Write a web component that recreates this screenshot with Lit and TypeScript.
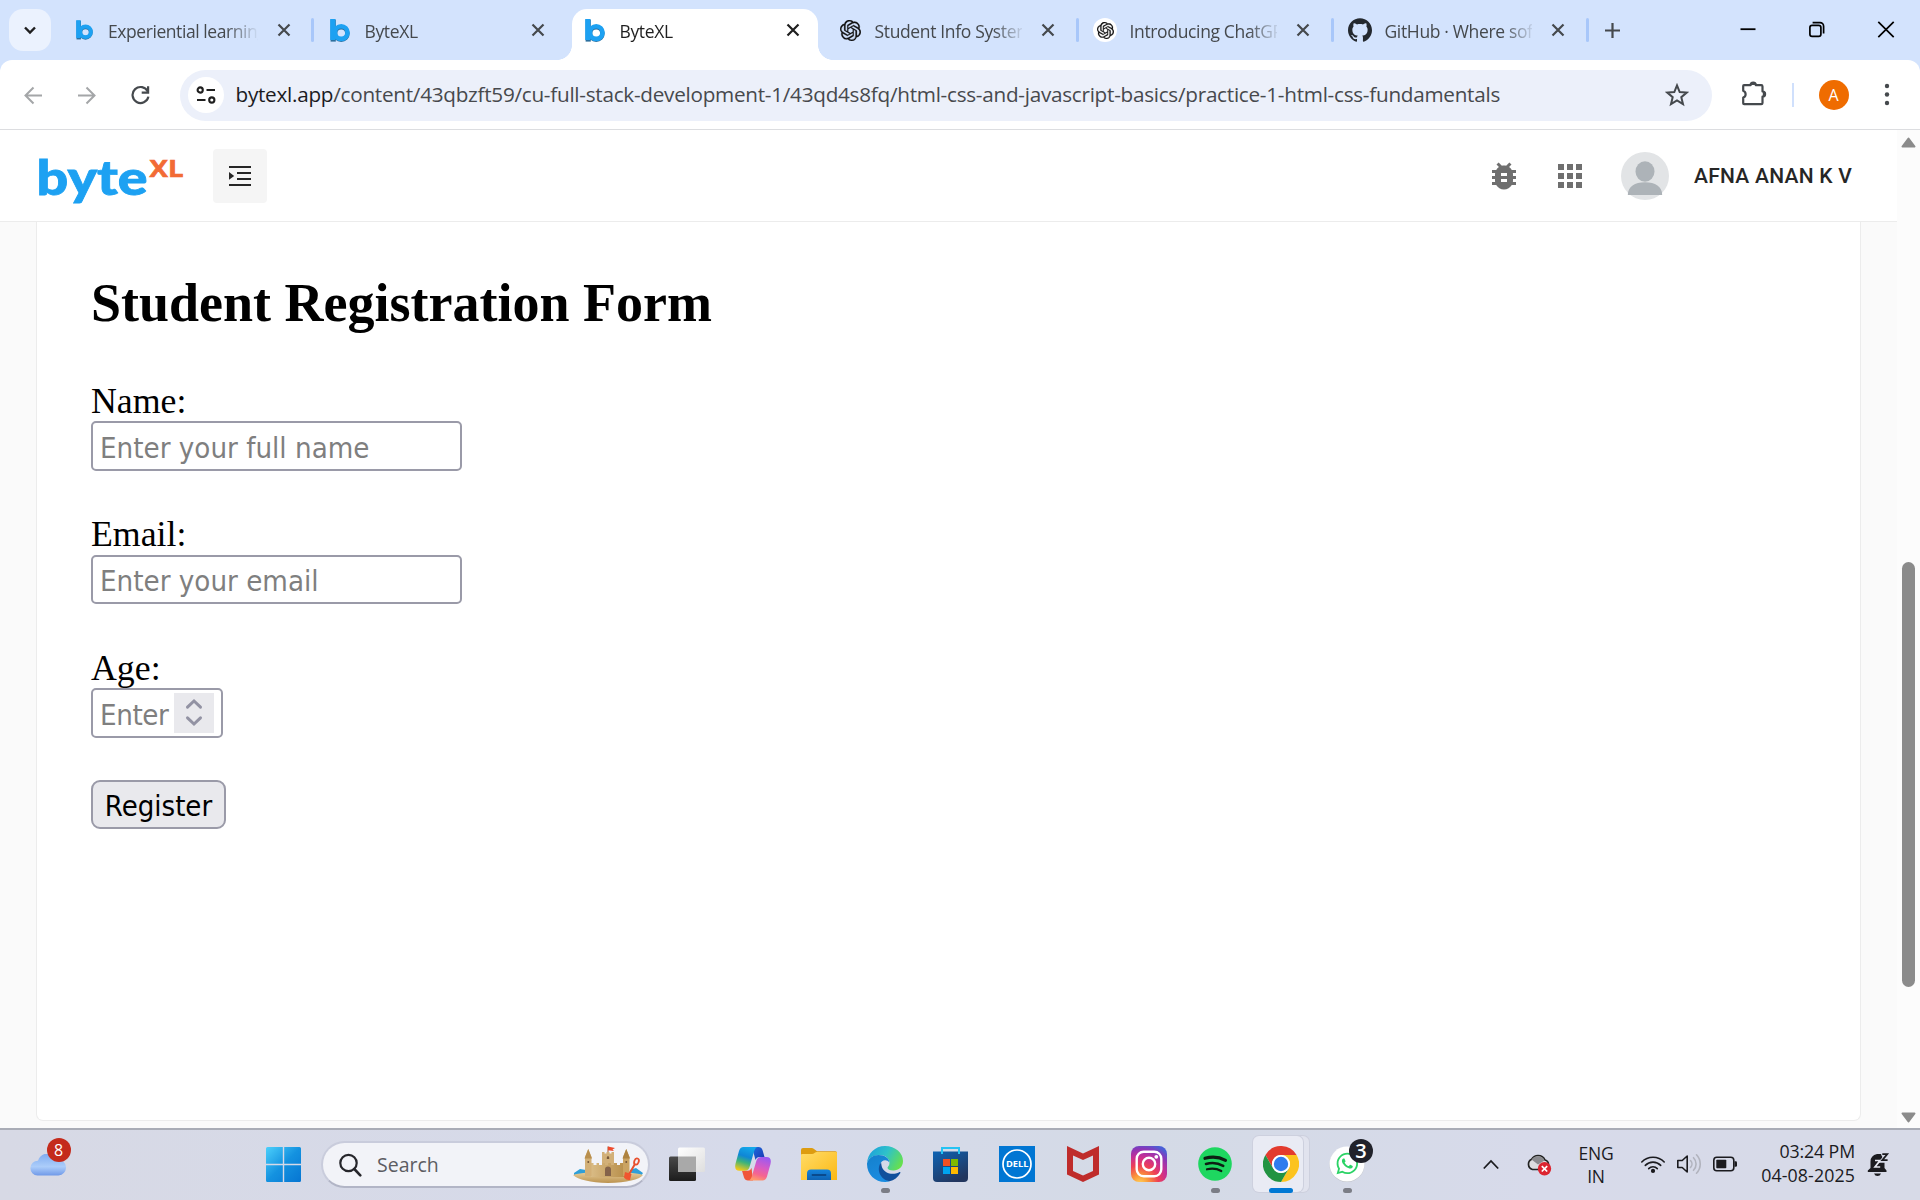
import { LitElement, html, css, svg, nothing } from "lit";
import { customElement } from "lit/decorators.js";
import { classMap } from "lit/directives/class-map.js";

const OPENAI_PATH =
  "M22.2819 9.8211a5.9847 5.9847 0 0 0-.5157-4.9108 6.0462 6.0462 0 0 0-6.5098-2.9A6.0651 6.0651 0 0 0 4.9807 4.1818a5.9847 5.9847 0 0 0-3.9977 2.9 6.0462 6.0462 0 0 0 .7427 7.0966 5.98 5.98 0 0 0 .511 4.9107 6.051 6.051 0 0 0 6.5146 2.9001A5.9847 5.9847 0 0 0 13.2599 24a6.0557 6.0557 0 0 0 5.7718-4.2058 5.9894 5.9894 0 0 0 3.9977-2.9001 6.0557 6.0557 0 0 0-.7475-7.0729zm-9.022 12.6081a4.4755 4.4755 0 0 1-2.8764-1.0408l.1419-.0804 4.7783-2.7582a.7948.7948 0 0 0 .3927-.6813v-6.7369l2.02 1.1686a.071.071 0 0 1 .038.052v5.5826a4.504 4.504 0 0 1-4.4945 4.4944zm-9.6607-4.1254a4.4708 4.4708 0 0 1-.5346-3.0137l.142.0852 4.783 2.7582a.7712.7712 0 0 0 .7806 0l5.8428-3.3685v2.3324a.0804.0804 0 0 1-.0332.0615L9.74 19.9502a4.4992 4.4992 0 0 1-6.1408-1.6464zM2.3408 7.8956a4.485 4.485 0 0 1 2.3655-1.9728V11.6a.7664.7664 0 0 0 .3879.6765l5.8144 3.3543-2.0201 1.1685a.0757.0757 0 0 1-.071 0l-4.8303-2.7865A4.504 4.504 0 0 1 2.3408 7.872zm16.5963 3.8558L13.1038 8.364 15.1192 7.2a.0757.0757 0 0 1 .071 0l4.8303 2.7913a4.4944 4.4944 0 0 1-.6765 8.1042v-5.6772a.79.79 0 0 0-.407-.667zm2.0107-3.0231l-.142-.0852-4.7735-2.7818a.7759.7759 0 0 0-.7854 0L9.409 9.2297V6.8974a.0662.0662 0 0 1 .0284-.0615l4.8303-2.7866a4.4992 4.4992 0 0 1 6.6802 4.66zM8.3065 12.863l-2.02-1.1638a.0804.0804 0 0 1-.038-.0567V6.0742a4.4992 4.4992 0 0 1 7.3757-3.4537l-.142.0805L8.704 5.459a.7948.7948 0 0 0-.3927.6813zm1.0976-2.3654l2.602-1.4998 2.6069 1.4998v2.9994l-2.5974 1.4997-2.6067-1.4997Z";
const GITHUB_PATH =
  "M12 .297c-6.63 0-12 5.373-12 12 0 5.303 3.438 9.8 8.205 11.385.6.113.82-.258.82-.577 0-.285-.01-1.04-.015-2.04-3.338.724-4.042-1.61-4.042-1.61C4.422 18.07 3.633 17.7 3.633 17.7c-1.087-.744.084-.729.084-.729 1.205.084 1.838 1.236 1.838 1.236 1.07 1.835 2.809 1.305 3.495.998.108-.776.417-1.305.76-1.605-2.665-.3-5.466-1.332-5.466-5.93 0-1.31.465-2.38 1.235-3.22-.135-.303-.54-1.523.105-3.176 0 0 1.005-.322 3.3 1.23.96-.267 1.98-.399 3-.405 1.02.006 2.04.138 3 .405 2.28-1.552 3.285-1.23 3.285-1.23.645 1.653.24 2.873.12 3.176.765.84 1.23 1.91 1.23 3.22 0 4.61-2.805 5.625-5.475 5.92.42.36.81 1.096.81 2.22 0 1.606-.015 2.896-.015 3.286 0 .315.21.69.825.57C20.565 22.092 24 17.592 24 12.297c0-6.627-5.373-12-12-12";
const WHATSAPP_PATH =
  "M17.472 14.382c-.297-.149-1.758-.867-2.03-.967-.273-.099-.471-.148-.67.15-.197.297-.767.966-.94 1.164-.173.199-.347.223-.644.075-.297-.15-1.255-.463-2.39-1.475-.883-.788-1.48-1.761-1.653-2.059-.173-.297-.018-.458.13-.606.134-.133.298-.347.446-.52.149-.174.198-.298.298-.497.099-.198.05-.371-.025-.52-.075-.149-.669-1.612-.916-2.207-.242-.579-.487-.5-.669-.51-.173-.008-.371-.01-.57-.01-.198 0-.52.074-.792.372-.272.297-1.04 1.016-1.04 2.479 0 1.462 1.065 2.875 1.213 3.074.149.198 2.096 3.2 5.077 4.487.709.306 1.262.489 1.694.625.712.227 1.36.195 1.871.118.571-.085 1.758-.719 2.006-1.413.248-.694.248-1.289.173-1.413-.074-.124-.272-.198-.57-.347m-5.421 7.403h-.004a9.87 9.87 0 01-5.031-1.378l-.361-.214-3.741.982.998-3.648-.235-.374a9.86 9.86 0 01-1.51-5.26c.001-5.45 4.436-9.884 9.888-9.884 2.64 0 5.122 1.03 6.988 2.898a9.825 9.825 0 012.893 6.994c-.003 5.45-4.437 9.884-9.885 9.884m8.413-18.297A11.815 11.815 0 0012.05 0C5.495 0 .16 5.335.157 11.892c0 2.096.547 4.142 1.588 5.945L.057 24l6.305-1.654a11.882 11.882 0 005.683 1.448h.005c6.554 0 11.89-5.335 11.893-11.893a11.821 11.821 0 00-3.48-8.413z";

const byteMark = (w: number, h: number) => html`
  <svg width=${w} height=${h} viewBox="0 0 20 23">
    <rect x="0.6" y="0.6" width="5.2" height="22" fill="#2b6f9e"></rect>
    <circle cx="11.2" cy="14.4" r="6.2" fill="none" stroke="#2b6f9e" stroke-width="4.6"></circle>
    <rect x="0.2" y="0" width="5.2" height="21" fill="#1da1f2"></rect>
    <circle cx="11.2" cy="13.6" r="6.3" fill="none" stroke="#1da1f2" stroke-width="4.6"></circle>
  </svg>`;

interface Tab {
  title: string;
  icon: "byte-small" | "byte" | "openai" | "openai-badge" | "github";
  active?: boolean;
  divider?: boolean;
}

const TABS: Tab[] = [
  { title: "Experiential learning", icon: "byte-small", divider: true },
  { title: "ByteXL", icon: "byte" },
  { title: "ByteXL", icon: "byte", active: true },
  { title: "Student Info System", icon: "openai", divider: true },
  { title: "Introducing ChatGPT", icon: "openai-badge", divider: true },
  { title: "GitHub · Where software", icon: "github", divider: true },
];

@customElement("tab-strip")
export class TabStrip extends LitElement {
  static styles = css`
    :host { display: flex; height: 60px; background: #d3e3fd; box-sizing: border-box; padding-left: 9px; font-family: "Open Sans", "Noto Sans", sans-serif; }
    svg { display: block; }
    .search { width: 42px; height: 42px; margin: 9px 6.5px 0 0; border-radius: 14px; background: #ebf2fe; display: grid; place-items: center; }
    .tab { position: relative; width: 255px; height: 60px; display: flex; align-items: center; box-sizing: border-box; z-index: 0; }
    .active::before { content: ""; position: absolute; z-index: -1; inset: 9px 4.5px 0 4.5px; border-radius: 15px 15px 0 0; background: #fff; }
    .foot { position: absolute; bottom: 0; width: 15px; height: 15px; }
    .left { left: -10.5px; background: radial-gradient(circle at 0 0, transparent 14.6px, #fff 15.2px); }
    .right { right: -10.5px; background: radial-gradient(circle at 100% 0, transparent 14.6px, #fff 15.2px); }
    .icon { width: 24px; height: 24px; margin-left: 15.5px; display: grid; place-items: center; border-radius: 50%; }
    .badge { background: #fff; }
    .title { width: 147px; margin: 2px 0 0 12.5px; white-space: nowrap; overflow: hidden; font-size: 17.5px; line-height: 26px; letter-spacing: -0.35px; color: #45494d; -webkit-mask-image: linear-gradient(to right, #000 118px, transparent 151px); mask-image: linear-gradient(to right, #000 118px, transparent 151px); }
    .compact { margin-left: 14.5px; }
    .compact + .title { margin-left: 12px; width: 150px; letter-spacing: -0.43px; }
    .active .title { color: #1f1f1f; }
    .close { margin-left: 19px; }
    .divider { position: absolute; right: -1.5px; top: 18px; width: 3px; height: 24px; border-radius: 1.5px; background: #a8c7fa; }
    .plus { margin: 22px 0 0 16.5px; }
    .window { display: flex; margin-left: auto; padding: 20px 25.5px 0 0; gap: 51px; }
  `;

  private icon(kind: Tab["icon"]) {
    if (kind === "byte-small") return byteMark(17, 20);
    if (kind === "byte") return byteMark(20, 23);
    if (kind === "github")
      return html`<svg width="24" height="24" viewBox="0 0 24 24"><path d=${GITHUB_PATH} fill="#24292f"></path></svg>`;
    const size = kind === "openai" ? 21 : 17;
    return html`<svg width=${size} height=${size} viewBox="0 0 24 24"><path d=${OPENAI_PATH} fill="#111" stroke="#111" stroke-width=".3"></path></svg>`;
  }

  render() {
    return html`
      <div class="search">
        <svg width="14" height="9" viewBox="0 0 14 9"><path d="M2 1.5 7 6.5l5-5" fill="none" stroke="#1f1f1f" stroke-width="2.4"></path></svg>
      </div>
      ${TABS.map(
        (t) => html`
          <div class=${classMap({ tab: true, active: !!t.active })}>
            ${t.active ? html`<span class="foot left"></span><span class="foot right"></span>` : nothing}
            <div class=${classMap({ icon: true, badge: t.icon === "openai-badge", compact: t.icon === "byte-small" })}>${this.icon(t.icon)}</div>
            <div class="title">${t.title}</div>
            <svg class="close" width="14" height="14" viewBox="0 0 14 14"><path d="M1.5 1.5l11 11M12.5 1.5l-11 11" stroke=${t.active ? "#1f1f1f" : "#45494d"} stroke-width="2.2"></path></svg>
            ${t.divider ? html`<span class="divider"></span>` : nothing}
          </div>
        `,
      )}
      <svg class="plus" width="17" height="17" viewBox="0 0 17 17"><path d="M8.5 1v15M1 8.5h15" stroke="#45494d" stroke-width="2.2"></path></svg>
      <div class="window">
        <svg width="18" height="20" viewBox="0 0 18 20"><path d="M1.5 9.2h15" stroke="#000" stroke-width="1.8"></path></svg>
        <svg width="18" height="20" viewBox="0 0 18 20" fill="none" stroke="#000" stroke-width="1.7"><rect x="1.9" y="5.4" width="11" height="11" rx="2.2"></rect><path d="M4.6 2.6H12a3.6 3.6 0 0 1 3.6 3.6v7.2"></path></svg>
        <svg width="18" height="20" viewBox="0 0 18 20"><path d="M1.3 1.8l15.4 15.4M16.7 1.8L1.3 17.2" stroke="#000" stroke-width="1.7"></path></svg>
      </div>
    `;
  }
}

@customElement("browser-toolbar")
export class BrowserToolbar extends LitElement {
  static styles = css`
    :host { display: block; background: #d3e3fd; font-family: "Open Sans", "Noto Sans", sans-serif; }
    svg { display: block; }
    .bar { display: flex; align-items: center; height: 70px; box-sizing: border-box; padding: 1px 24px 0 24px; background: #fff; border-radius: 12px 12px 0 0; border-bottom: 1px solid #dcdde0; }
    .forward { margin-left: 34px; }
    .reload { margin-left: 34px; }
    .omnibox { width: 1532px; height: 51px; margin-left: 29px; border-radius: 26px; background: #ecf0fa; display: flex; align-items: center; box-sizing: border-box; padding: 0 23px 0 8px; }
    .site { width: 36px; height: 36px; border-radius: 50%; background: #fff; display: grid; place-items: center; }
    .url { flex: 1; margin: -2px 0 0 11.5px; font-size: 20.7px; line-height: 30px; letter-spacing: -0.26px; color: #47494d; white-space: nowrap; }
    .host { color: #1b1b1f; }
    .ext { margin: -4px 0 0 28px; }
    .divider { width: 2px; height: 24px; margin-left: 24px; background: #d0e0fc; }
    .avatar { width: 30px; height: 30px; margin-left: 24.5px; border-radius: 50%; background: #ef6c00; color: #fff; font-size: 16px; line-height: 30px; text-align: center; }
    .dots { margin-left: auto; }
  `;
  render() {
    return html`
      <div class="bar">
        <svg width="19" height="19" viewBox="0 0 19 19"><path d="M18 9.5H2M9.5 1.5l-8 8 8 8" fill="none" stroke="#a4a6a8" stroke-width="2"></path></svg>
        <svg class="forward" width="19" height="19" viewBox="0 0 19 19"><path d="M1 9.5h16M9.5 1.5l8 8-8 8" fill="none" stroke="#a4a6a8" stroke-width="2"></path></svg>
        <svg class="reload" width="21" height="20" viewBox="0 0 21 20"><path d="M17.8 6.6A8 8 0 1 0 18.4 11.6" fill="none" stroke="#45494d" stroke-width="2.2"></path><path d="M18.1 1.2v6.4h-6.4" fill="none" stroke="#45494d" stroke-width="2.2"></path></svg>
        <div class="omnibox">
          <div class="site">
            <svg width="20" height="18" viewBox="0 0 20 18" fill="none" stroke="#1f1f1f" stroke-width="2.1"><circle cx="4.2" cy="4" r="2.6"></circle><path d="M10.5 4H19M1 14h8.5"></path><circle cx="15.8" cy="14" r="2.6"></circle></svg>
          </div>
          <div class="url"><span class="host">bytexl.app</span>/content/43qbzft59/cu-full-stack-development-1/43qd4s8fq/html-css-and-javascript-basics/practice-1-html-css-fundamentals</div>
          <svg width="24" height="24" viewBox="0 0 24 24"><path d="M12 2.4l2.7 6.7 7 .5-5.4 4.6 1.7 7-6-3.8-6 3.8 1.7-7L2.3 9.6l7-.5z" fill="none" stroke="#45494d" stroke-width="2"></path></svg>
        </div>
        <svg class="ext" width="28" height="28" viewBox="0 0 28 28"><path d="M4 6.2h6.6a2.6 2.6 0 0 1 5.2 0h5.4q1.3 0 1.3 1.3v5a2.6 2.6 0 0 1 0 5.2v6.2q0 1.3-1.3 1.3H4.2q-1 0-1-1v-5.6a3.6 3.6 0 0 0 0-6.8V7q0-.8.8-.8z" fill="none" stroke="#45494d" stroke-width="2.2" stroke-linejoin="round"></path><path d="M10.2 6a3 3 0 0 1 6 0zM22.8 12.2a3 3 0 0 1 0 6z" fill="#45494d"></path></svg>
        <span class="divider"></span>
        <div class="avatar">A</div>
        <svg class="dots" width="18" height="24" viewBox="0 0 18 24" fill="#45494d"><circle cx="9" cy="3" r="2.2"></circle><circle cx="9" cy="11.5" r="2.2"></circle><circle cx="9" cy="20" r="2.2"></circle></svg>
      </div>
    `;
  }
}

@customElement("course-page")
export class CoursePage extends LitElement {
  static styles = css`
    :host { display: flex; flex: 1; min-height: 0; background: #fafafa; }
    svg { display: block; }
    .main { flex: 1; display: flex; flex-direction: column; }
    .header { height: 92px; box-sizing: border-box; padding: 0 45px 0 36px; display: flex; align-items: center; background: #fff; border-bottom: 1px solid #ececec; }
    .logo { margin-top: 4px; overflow: visible; }
    .byte { font: 900 47px Lato, sans-serif; }
    .xl { font: 700 23px "Open Sans", sans-serif; }
    .menu { width: 54px; height: 54px; margin-left: 25px; border-radius: 4px; background: #f5f5f5; display: grid; place-items: center; }
    .tools { display: flex; align-items: center; margin-left: auto; }
    .grid { margin-left: 36px; }
    .photo { margin-left: 39px; }
    .user { width: 158px; margin-left: 25px; font: 500 21px Roboto, sans-serif; line-height: 26px; letter-spacing: 0.25px; color: #262626; white-space: nowrap; }
    .card { flex: 1; margin: 0 36px 7px 36px; padding: 51px 0 0 54px; background: #fff; border: 1px solid #ececec; border-top: 0; border-radius: 0 0 7px 7px; font-family: "Liberation Serif", serif; color: #000; }
    h2 { margin: 0 0 48px; font-size: 54px; line-height: 60px; font-weight: 700; }
    .field { margin-bottom: 44px; }
    label { display: block; font-size: 35.8px; line-height: 40px; margin-top: -0.5px; padding-bottom: 0.5px; }
    .box { display: flex; align-items: center; width: 371px; height: 49.5px; box-sizing: border-box; border: 2px solid #9a9aa8; border-radius: 5px; padding: 0 7px; background: #fff; }
    .short { width: 132px; }
    input { flex: 1; min-width: 0; border: 0; padding: 4px 0 0; box-sizing: border-box; outline: 0; background: none; font: 29.2px "DejaVu Sans Condensed", "DejaVu Sans", sans-serif; font-stretch: condensed; height: 44px; }
    .short input { letter-spacing: -0.4px; }
    input::placeholder { color: #7f7f7f; opacity: 1; }
    .spin { width: 40px; height: 40px; background: #e9e9ed; display: grid; place-items: center; }
    .submit { display: block; margin-top: -2px; width: 135px; height: 49px; box-sizing: border-box; padding: 4px 0 0; border: 2px solid #9a9aa8; border-radius: 9px; background: #e9e9ed; font: 29px "DejaVu Sans Condensed", "DejaVu Sans", sans-serif; font-stretch: condensed; line-height: 40px; color: #000; white-space: nowrap; }
    .scroll { width: 23px; box-sizing: border-box; padding: 7px 3px 5px; background: #fcfcfc; display: flex; flex-direction: column; align-items: center; }
    .thumb { width: 13px; height: 425px; margin-top: 414px; border-radius: 7px; background: #8b8b8b; }
    .down { margin-top: auto; }
  `;
  render() {
    return html`
      <div class="main">
        <div class="header">
          <svg class="logo" width="152" height="56" viewBox="0 0 152 56">
            <text class="byte" x="0.5" y="44.5" textLength="111" lengthAdjust="spacingAndGlyphs" fill="#1da1f2" stroke="#1da1f2" stroke-width=".8">byte</text>
            <text class="xl" x="113.5" y="26.5" textLength="34" lengthAdjust="spacingAndGlyphs" fill="#f26b35" stroke="#f26b35" stroke-width=".6">XL</text>
          </svg>
          <div class="menu">
            <svg width="22" height="20" viewBox="0 0 22 20" fill="#262626"><path d="M0 0h22v1.9H0zM8 6h14v1.9H8zM8 12h14v1.9H8zM0 18h22v1.9H0zM0 6v7.8L5.2 9.9z"></path></svg>
          </div>
          <div class="tools">
            <svg width="36" height="36" viewBox="0 0 24 24"><path fill="#6f6f6f" d="M20 8h-2.81c-.45-.78-1.07-1.45-1.82-1.96L17 4.41 15.59 3l-2.17 2.17C12.96 5.06 12.49 5 12 5c-.49 0-.96.06-1.41.17L8.41 3 7 4.41l1.62 1.63C7.88 6.55 7.26 7.22 6.81 8H4v2h2.09c-.05.33-.09.66-.09 1v1H4v2h2v1c0 .34.04.67.09 1H4v2h2.81c1.04 1.79 2.97 3 5.19 3s4.15-1.21 5.19-3H20v-2h-2.09c.05-.33.09-.66.09-1v-1h2v-2h-2v-1c0-.34-.04-.67-.09-1H20V8zm-6 8h-4v-2h4v2zm0-4h-4v-2h4v2z"></path></svg>
            <svg class="grid" width="24" height="24" viewBox="0 0 24 24" fill="#6f6f6f">
              ${[0, 9, 18].map((y) => [0, 9, 18].map((x) => svg`<rect x=${x} y=${y} width="6" height="6"></rect>`))}
            </svg>
            <svg class="photo" width="48" height="48" viewBox="0 0 48 48">
              <circle cx="24" cy="24" r="24" fill="#e2e4e6"></circle>
              <ellipse cx="24" cy="19.5" rx="9.5" ry="10.3" fill="#adb3b8"></ellipse>
              <path d="M6.8 43c0-8.5 7-12.7 17.2-12.7S41.2 34.5 41.2 43z" fill="#adb3b8"></path>
            </svg>
            <div class="user">AFNA ANAN K V</div>
          </div>
        </div>
        <div class="card">
          <h2>Student Registration Form</h2>
          <div class="field"><label>Name:</label><div class="box"><input placeholder="Enter your full name" /></div></div>
          <div class="field"><label>Email:</label><div class="box"><input placeholder="Enter your email" /></div></div>
          <div class="field">
            <label>Age:</label>
            <div class="box short">
              <input placeholder="Enter" />
              <div class="spin">
                <svg width="18" height="29" viewBox="0 0 18 29"><path d="M2.5 9.2 9 3l6.5 6.2M2.5 19.8 9 26l6.5-6.2" fill="none" stroke="#9292a3" stroke-width="3" stroke-linecap="round"></path></svg>
              </div>
            </div>
          </div>
          <button class="submit">Register</button>
        </div>
      </div>
      <div class="scroll">
        <svg width="15" height="11" viewBox="0 0 15 11"><path d="M7.5 1.5 13.5 9.5H1.5z" fill="#8b8b8b" stroke="#8b8b8b" stroke-width="2" stroke-linejoin="round"></path></svg>
        <div class="thumb"></div>
        <svg class="down" width="15" height="11" viewBox="0 0 15 11"><path d="M7.5 9.5 13.5 1.5H1.5z" fill="#8b8b8b" stroke="#8b8b8b" stroke-width="2" stroke-linejoin="round"></path></svg>
      </div>
    `;
  }
}

const taskView = html`<svg width="36" height="36" viewBox="0 0 36 36"><defs><linearGradient id="tv" x1="0" y1="0" x2="1" y2="1"><stop offset="0" stop-color="#fff"></stop><stop offset="1" stop-color="#dedede"></stop></linearGradient><linearGradient id="tvd" x1="0" y1="0" x2="0" y2="1"><stop offset="0" stop-color="#4a4a4a"></stop><stop offset="1" stop-color="#1c1c1c"></stop></linearGradient></defs><rect x="0" y="10.5" width="27" height="24.5" rx="1.5" fill="url(#tvd)"></rect><rect x="9" y="1.5" width="27" height="24.5" rx="1.5" fill="url(#tv)"></rect><path d="M9 10.5h18V26H10.5Q9 26 9 24.5z" fill="#a9a9a9"></path></svg>`;

const copilot = html`<svg width="36" height="36" viewBox="0 0 36 36"><defs>
  <linearGradient id="ca" x1=".6" y1="0" x2=".3" y2="1"><stop offset="0" stop-color="#14a8ea"></stop><stop offset=".4" stop-color="#0f86d6"></stop><stop offset=".65" stop-color="#3bb37c"></stop><stop offset="1" stop-color="#f2c918"></stop></linearGradient>
  <linearGradient id="cb" x1=".7" y1="0" x2=".4" y2="1"><stop offset="0" stop-color="#9a5af2"></stop><stop offset=".45" stop-color="#d95bc3"></stop><stop offset=".75" stop-color="#f5658f"></stop><stop offset="1" stop-color="#ff9a6a"></stop></linearGradient>
  <linearGradient id="cc" x1="0" y1="0" x2="1" y2="1"><stop offset="0" stop-color="#1d6fe0"></stop><stop offset="1" stop-color="#1b35b0"></stop></linearGradient></defs>
  <path d="M17 1h6.5q3 0 4 3l2 7h-5q-3 0-4 3z" fill="url(#cc)"></path>
  <path d="M18 34.5h-5q-3 0-4-3L7 24.8h6q2.5 0 3.5-3z" fill="#f0553a"></path>
  <path d="M8.5 1H23q-2.5 0-3.8 4l-4.5 15.5q-1.2 4.3-5 4.3H4.5q-5.500 0-4-7L4 5q1.2-4 4.5-4z" fill="url(#ca)"></path>
  <path d="M27.5 34.5H13q2.5 0 3.8-4l4.5-15.5q1.2-4 5-4h5.2q5.5 0 4 7l-3.5 12.5q-1.2 4-4.5 4z" fill="url(#cb)"></path></svg>`;

const folder = html`<svg width="36" height="36" viewBox="0 0 36 36"><defs><linearGradient id="fo" x1="0" y1="0" x2="1" y2="1"><stop offset="0" stop-color="#ffdc68"></stop><stop offset="1" stop-color="#fcb813"></stop></linearGradient><linearGradient id="fb" x1="0" y1="0" x2="0" y2="1"><stop offset="0" stop-color="#1484dc"></stop><stop offset="1" stop-color="#0f63b4"></stop></linearGradient></defs><path d="M0 12V4q0-2 2-2h8.500q1.500 0 2.500 1l3 2.200h18.500q1.500 0 1.500 1.500V12z" fill="#dd9c10"></path><path d="M0 9q0-1 1-1h10q1.500 0 2.500-1t2.500-1h19q1 0 1 1v27H0z" fill="url(#fo)"></path><path d="M6 34v-6.500Q6 23.500 10 23.500h16q4 0 4 4V34z" fill="url(#fb)"></path><path d="M11.500 29h13" stroke="#0a4a8c" stroke-width="1.8" stroke-linecap="round"></path></svg>`;

const edge = html`<svg width="36" height="36" viewBox="0 0 36 36"><defs><linearGradient id="eg" x1="0" y1=".2" x2="1" y2=".6"><stop offset="0" stop-color="#1b9fdc"></stop><stop offset=".5" stop-color="#2fc2c9"></stop><stop offset="1" stop-color="#66e04e"></stop></linearGradient><linearGradient id="eb" x1="0" y1="0" x2=".4" y2="1"><stop offset="0" stop-color="#1480cc"></stop><stop offset="1" stop-color="#1b8ce0"></stop></linearGradient></defs>
  <path d="M0 17.5C.5 7.5 8 0 18 0c10.5 0 18 7 18 15 0 6-4.5 9.5-9.5 9.5-4 0-6-1.3-6-2.8 0-1.2 2-2 2-5C22.5 12.5 18.5 9 12 9 6 9 1 12.5 0 17.5z" fill="url(#eg)"></path>
  <path d="M0 17.5C1.5 12 6 9 11.5 9 18 9 22.3 12.3 22.3 16.5 20 13 14 13.5 13 19c-1 6 3 13 9.5 16.3C20.5 36 19 36 18 36 8 36 0 28.5 0 18z" fill="url(#eb)"></path>
  <path d="M14 16.5c-5 6.5-1 17 8.5 18.8 4.5-1 8.5-4 10.7-8 .6-1-.3-1.500-1-1-6.500 3.200-14.500 1.200-17-4.500-.8-2-.8-4-1.200-5.300z" fill="#10509c"></path></svg>`;

const store = html`<svg width="36" height="36" viewBox="0 0 36 36"><defs><linearGradient id="st" x1="0" y1="0" x2=".6" y2="1"><stop offset="0" stop-color="#0e63b4"></stop><stop offset="1" stop-color="#22365e"></stop></linearGradient></defs><path d="M0 5.5h35V32q0 4-4 4H4q-4 0-4-4z" fill="url(#st)"></path><path d="M9 8V2h17v6" fill="none" stroke="#25c3f3" stroke-width="2"></path><path d="M10 13h7v7h-7z" fill="#f25022"></path><path d="M18 13h7v7h-7z" fill="#7fba00"></path><path d="M10 21h7v7h-7z" fill="#00a4ef"></path><path d="M18 21h7v7h-7z" fill="#ffb900"></path></svg>`;

const dell = html`<svg width="36" height="36" viewBox="0 0 36 36"><rect width="36" height="36" fill="#0076d3"></rect><circle cx="18" cy="18" r="14" fill="none" stroke="#fff" stroke-width="1.7"></circle><text x="7" y="21.2" textLength="22.5" lengthAdjust="spacingAndGlyphs" font-family="Open Sans, sans-serif" font-weight="700" font-size="9" fill="#fff">DELL</text></svg>`;

const mcafee = html`<svg width="36" height="36" viewBox="0 0 36 36"><path d="M2 0l16 7.5L34 0v28.5L18 36 2 28.5zM8 9.5V25l10 4.5L28 25V9.5L18 14z" fill="#bf2c2b" fill-rule="evenodd"></path></svg>`;

const instagram = html`<svg width="36" height="36" viewBox="0 0 36 36"><defs><radialGradient id="ig" cx=".25" cy="1.05" r="1.15"><stop offset="0" stop-color="#ffd35a"></stop><stop offset=".2" stop-color="#fb9a3a"></stop><stop offset=".45" stop-color="#ee3f55"></stop><stop offset=".65" stop-color="#c92f92"></stop><stop offset=".85" stop-color="#8a36b8"></stop><stop offset="1" stop-color="#4a5fd6"></stop></radialGradient></defs><rect width="36" height="36" rx="8" fill="url(#ig)"></rect><g fill="none" stroke="#fff" stroke-width="2.4"><rect x="5.7" y="5.7" width="24.6" height="24.6" rx="7"></rect><circle cx="18" cy="18" r="6.2"></circle></g><circle cx="25.3" cy="10.8" r="1.9" fill="#fff"></circle></svg>`;

const spotify = html`<svg width="36" height="36" viewBox="0 0 36 36"><circle cx="18" cy="18" r="16.8" fill="#1ed760"></circle><g fill="none" stroke="#0d1f13" stroke-linecap="round"><path d="M8 12.3c7-2 14.5-1.300 20.500 2" stroke-width="3.2"></path><path d="M9 18c6-1.700 12-1 17.200 1.800" stroke-width="2.6"></path><path d="M10 23.3c5-1.200 10-.700 14.300 1.700" stroke-width="2.2"></path></g></svg>`;

const chrome = html`<svg width="36" height="36" viewBox="0 0 36 36"><path d="M18 9h15.600A18 18 0 0 0 2.410 9L10.200 22.500A9 9 0 0 1 18 9z" fill="#e33b2e"></path><path d="M18 9h15.600A18 18 0 0 1 18 36l7.800-13.500A9 9 0 0 0 18 9z" fill="#fcc31e"></path><path d="M10.200 22.500L2.410 9A18 18 0 0 0 18 36l7.800-13.500a9 9 0 0 1-15.600 0z" fill="#229342"></path><circle cx="18" cy="18" r="9" fill="#fff"></circle><circle cx="18" cy="18" r="7.2" fill="#2f7cee"></circle></svg>`;

const whatsapp = html`<svg width="36" height="36" viewBox="0 0 36 36"><circle cx="18" cy="18.5" r="17.5" fill="#b9bcc2"></circle><circle cx="18" cy="18" r="17.5" fill="#fff"></circle><path transform="translate(7.5 6.7) scale(.9)" d=${WHATSAPP_PATH} fill="#2cd366"></path></svg>`;

const castle = html`<svg width="72" height="38" viewBox="0 0 72 38"><defs><linearGradient id="cw" x1="0" y1="0" x2="1" y2="0"><stop offset="0" stop-color="#d9bb85"></stop><stop offset="1" stop-color="#b48a44"></stop></linearGradient><linearGradient id="cs" x1="0" y1="0" x2="0" y2="1"><stop offset="0" stop-color="#e8cf9c"></stop><stop offset="1" stop-color="#bb924e"></stop></linearGradient></defs>
  <path d="M2 27l6-4 6 1v5H2zM58 24l6-2 7 5-2 3H58z" fill="#2f9fd8"></path>
  <path d="M1 29q8-3 35-3t35 3q-6 7-35 8Q9 36 1 29z" fill="url(#cs)"></path>
  <path d="M36 .5v6" stroke="#a8522a" stroke-width="1"></path><path d="M36 .5l7 1.500-2.500 1.500L42 5l-6-.7z" fill="#ee4a2c"></path>
  <path d="M30 8v-2h2.500v1.500h2V6h3v1.500h2V6H42v24H30z" fill="#d2b078"></path>
  <path d="M19 17h2.500v2h3v-2h2.500v2h3v-2h3v2h3v-2h3v2h3v-2h3v2h3v-2h3v2h3v-2h3v14H19z" fill="url(#cw)"></path>
  <path d="M13 30V11l3.200-8 3.300 8v19z" fill="#d3b077"></path><path d="M12.500 12.500l3.800-9.500L20 12.500z" fill="#b98f4e"></path>
  <path d="M51 30V11l3.200-8 3.300 8v19z" fill="#caa362"></path><path d="M50.500 12.500l3.800-9.500L58 12.500z" fill="#ad8240"></path>
  <path d="M33 30v-6.500a3 3 0 0 1 6 0V30z" fill="#84634a"></path><path d="M34.800 13v-1.500a1.200 1.200 0 0 1 2.400 0V13zM15.500 17v-2h1.600v2zM53.500 17v-2h1.600v2z" fill="#7a5a3a"></path>
  <path d="M56 30l7-12" stroke="#e8502e" stroke-width="2"></path><ellipse cx="64.5" cy="15.5" rx="2.2" ry="3.2" transform="rotate(20 64.5 15.5)" fill="none" stroke="#e8502e" stroke-width="1.8"></ellipse><path d="M53 26l6.500 2-1.500 6q-4 .5-6-2.500z" fill="#f0552f"></path></svg>`;

const APPS = [
  { icon: taskView, state: "" },
  { icon: copilot, state: "" },
  { icon: folder, state: "" },
  { icon: edge, state: "open" },
  { icon: store, state: "" },
  { icon: dell, state: "" },
  { icon: mcafee, state: "" },
  { icon: instagram, state: "" },
  { icon: spotify, state: "open" },
  { icon: chrome, state: "current" },
  { icon: whatsapp, state: "open", badge: "3" },
];

@customElement("task-bar")
export class TaskBar extends LitElement {
  static styles = css`
    :host { display: flex; height: 72px; box-sizing: border-box; border-top: 2px solid #a9acb6; background: linear-gradient(90deg, #d7d9e5, #d6daea 40%, #d4dae6 60%, #d7daea 80%, #d7dae7); font-family: "Open Sans", "Noto Sans", sans-serif; color: #1b1b1f; }
    svg { display: block; }
    .weather { position: relative; width: 36px; margin: 24px 0 0 29.5px; align-self: flex-start; }
    .alert { position: absolute; left: 17px; top: -16px; width: 24px; height: 24px; border-radius: 50%; background: #c42b1c; color: #fff; font-size: 16px; line-height: 24px; text-align: center; }
    .start { margin: 17px 0 0 200.5px; }
    .search { width: 329px; height: 47px; margin: 11px 4px 0 20px; box-sizing: border-box; padding: 0 4px 0 15.5px; display: flex; align-items: center; border: 2px solid #c9ccdc; border-bottom-color: #b2b5c6; border-radius: 24px; background: #f2f3f8; }
    .hint { flex: 1; margin-left: 15.5px; font-size: 19.5px; line-height: 28px; color: #5c5c62; }
    .app { position: relative; width: 66px; height: 70px; display: grid; place-items: center; box-sizing: border-box; padding-bottom: 2px; z-index: 0; }
    .open::after { content: ""; position: absolute; left: 28.5px; top: 58px; width: 9px; height: 5px; border-radius: 2.5px; background: #7b7d86; }
    .current::after { content: ""; position: absolute; left: 21px; top: 58px; width: 24px; height: 5px; border-radius: 2.5px; background: #0078d4; }
    .tile { position: absolute; z-index: -1; left: 5px; top: 6px; width: 50px; height: 56px; border-radius: 6px; background: #e9ebf4; box-shadow: 0 0 0 1px #cdd0de; }
    .stack { position: absolute; z-index: -2; left: 12px; top: 6px; width: 49px; height: 56px; border-radius: 6px; background: #e1e3ee; box-shadow: 0 0 0 1px #cdd0de; }
    .badge { position: absolute; left: 35px; top: 9px; width: 24px; height: 24px; border-radius: 50%; background: #21222b; color: #fff; font-size: 20px; font-weight: 600; line-height: 23px; text-align: center; }
    .tray { display: flex; align-items: center; width: 407px; height: 68px; margin: 0 30px 0 auto; }
    .cloud { margin-left: 27px; }
    .lang { width: 42px; margin: 1px 23px 0; text-align: center; font-size: 17.5px; line-height: 23px; letter-spacing: -0.2px; }
    .volume { margin-left: 10px; }
    .battery { margin-left: 8px; }
    .clock { flex: 1; margin: -2px 11px 0 0; text-align: right; font-size: 17.8px; line-height: 24px; letter-spacing: 0.1px; white-space: nowrap; }
    .time { letter-spacing: -0.15px; }
  `;
  render() {
    return html`
      <div class="weather">
        <svg width="36" height="22" viewBox="0 0 36 22"><defs><linearGradient id="w" x1="0" y1="0" x2="0" y2="1"><stop offset="0" stop-color="#7fabf0"></stop><stop offset=".6" stop-color="#accdfa"></stop><stop offset="1" stop-color="#7099e8"></stop></linearGradient></defs><path d="M7.5 21.5A7.3 7.3 0 0 1 8 6.8 10.5 10.5 0 0 1 27.5 5.5 8 8 0 0 1 28.5 21.5z" fill="url(#w)"></path></svg>
        <span class="alert">8</span>
      </div>
      <svg class="start" width="35" height="35" viewBox="0 0 35 35"><defs><linearGradient id="s" gradientUnits="userSpaceOnUse" x1="0" y1="0" x2="35" y2="35"><stop offset="0" stop-color="#4cd0fb"></stop><stop offset=".5" stop-color="#1492e0"></stop><stop offset="1" stop-color="#0675d2"></stop></linearGradient></defs><path fill="url(#s)" d="M1.5 0H16.8v16.8H0V1.5Q0 0 1.5 0zM18.2 0h15.3Q35 0 35 1.5v15.3H18.2zM0 18.2h16.8V35H1.5Q0 35 0 33.5zM18.2 18.2H35v15.3q0 1.5-1.5 1.5H18.2z"></path></svg>
      <div class="search">
        <svg width="23" height="24" viewBox="0 0 23 24"><circle cx="9.5" cy="10" r="8.2" fill="none" stroke="#26262b" stroke-width="2.2"></circle><path d="M15.3 16l6 6.3" stroke="#26262b" stroke-width="2.6" stroke-linecap="round"></path></svg>
        <span class="hint">Search</span>
        ${castle}
      </div>
      ${APPS.map(
        (a) => html`
          <div class=${classMap({ app: true, open: a.state === "open", current: a.state === "current" })}>
            ${a.state === "current" ? html`<span class="stack"></span><span class="tile"></span>` : nothing}
            ${a.icon}
            ${a.badge ? html`<span class="badge">${a.badge}</span>` : nothing}
          </div>
        `,
      )}
      <div class="tray">
        <svg width="16" height="11" viewBox="0 0 16 11"><path d="M.8 9.500 8 2l7.200 7.500" fill="none" stroke="#1b1b1f" stroke-width="1.8"></path></svg>
        <svg class="cloud" width="26" height="24" viewBox="0 0 26 24"><path d="M6.5 17.5a5.5 5.5 0 0 1-.8-10.300Q8 3.500 12 3.500q5 0 7 4.500 3.500 1 3.500 4.500t-4 5z" fill="#dcdcdf" stroke="#222" stroke-width="1.7"></path><path d="M5.5 7.5Q8 4.3 12 4.3q4.5 0 6.5 4.2l-6.5 4z" fill="#8a8a8e"></path><circle cx="18.5" cy="16.8" r="6.7" fill="#dc2430"></circle><path d="M15.800 14.100l5.400 5.400M21.200 14.100l-5.400 5.400" stroke="#fff" stroke-width="1.7"></path></svg>
        <div class="lang">ENG<br />IN</div>
        <svg width="26" height="20" viewBox="0 0 26 20" fill="none" stroke="#1b1b1f" stroke-width="1.6" stroke-linecap="round"><path d="M1.8 8a15.5 15.5 0 0 1 22.4 0M5.3 11.4a10.7 10.7 0 0 1 15.4 0M8.7 14.6a6 6 0 0 1 8.6 0"></path><circle cx="13" cy="16.9" r="1.3" fill="#1b1b1f"></circle></svg>
        <svg class="volume" width="28" height="22" viewBox="0 0 28 22" fill="none" stroke-width="1.6"><path d="M1.8 7.5h4.4l5-4.5v16l-5-4.500H1.800z" stroke="#1b1b1f" stroke-linejoin="round"></path><path d="M14.500 7.500a5 5 0 0 1 0 7M17.500 4.700a9 9 0 0 1 0 12.600M20.500 1.800a13.200 13.200 0 0 1 0 18.400" stroke="#b1b3bd" stroke-linecap="round"></path></svg>
        <svg class="battery" width="26" height="16" viewBox="0 0 26 16"><rect x="1.8" y="1.3" width="20" height="13.4" rx="3" fill="none" stroke="#1b1b1f" stroke-width="1.6"></rect><rect x="4.3" y="3.8" width="10" height="8.4" rx=".8" fill="#1b1b1f"></rect><path d="M22.5 5.3h1.2q1.3 0 1.3 1.3v2.8q0 1.3-1.3 1.3h-1.2z" fill="#1b1b1f"></path></svg>
        <div class="clock"><span class="time">03:24 PM</span><br />04-08-2025</div>
        <svg width="24" height="26" viewBox="0 0 24 26"><path d="M4.5 17V10.5Q4.5 4.5 11 3h4l3.5 8V17l2 2.500v1.500H1.800v-1.500z" fill="#1b1b1f"></path><path d="M8 22.5h7q-1 2.5-3.5 2.5T8 22.5z" fill="#1b1b1f"></path><path d="M15.8 3.2h5l-5 6.8h5.5" fill="none" stroke="#d7dae7" stroke-width="3.6"></path><path d="M9 9.5h5l-5 6.5h5.2" fill="none" stroke="#e6e8f1" stroke-width="1.7"></path><path d="M16.3 3.2h4.9l-4.9 6h5.3" fill="none" stroke="#1b1b1f" stroke-width="1.8"></path></svg>
      </div>
    `;
  }
}

@customElement("app-root")
export class AppRoot extends LitElement {
  static styles = css`
    :host { display: flex; flex-direction: column; width: 1920px; height: 1200px; overflow: hidden; }
  `;
  render() {
    return html`
      <tab-strip></tab-strip>
      <browser-toolbar></browser-toolbar>
      <course-page></course-page>
      <task-bar></task-bar>
    `;
  }
}
